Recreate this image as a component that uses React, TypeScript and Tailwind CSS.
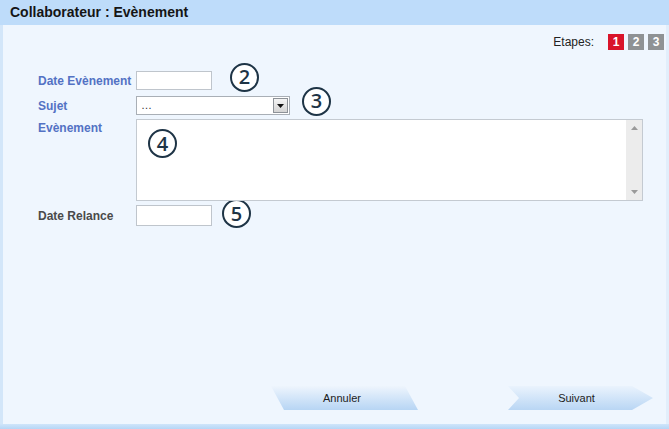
import React from 'react';

const font = { fontFamily: '"Liberation Sans", Arial, sans-serif' };

// numbered annotation circle pasted over the form
const Mark = ({ n, className = '' }: { n: number; className?: string }) => (
  <span
    className={`flex h-[29px] w-[29px] shrink-0 items-center justify-center rounded-full border-[2.5px] border-[#1e3446] bg-white text-[20px] font-semibold leading-none text-[#1e3446] [font-family:'Open_Sans',sans-serif] ${className}`}
  >
    {n}
  </span>
);

const Label = ({ children, muted }: { children: React.ReactNode; muted?: boolean }) => (
  <span className={`w-[98px] shrink-0 text-[12px] font-bold ${muted ? 'text-[#4a4a4a]' : 'text-[#5372c4]'}`}>{children}</span>
);

const App: React.FC = () => {
  return (
    <div style={font} className="flex h-[429px] w-[669px] flex-col overflow-hidden bg-[#eff6fe]">
      <header className="flex h-[25px] shrink-0 items-center bg-[#bedcfa] pl-[10px]">
        <h1 className="text-[14px] font-bold text-[#151515]">Collaborateur : Evènement</h1>
      </header>

      <div className="flex flex-1 border-l-[3px] border-r-[3px] border-l-[#d3e6f9] border-r-[#e2eefb]">
        <div className="flex flex-1 flex-col">
          <div className="flex items-center justify-end gap-[4px] pr-[2px] pt-[8px]">
            <span className="mr-[10px] text-[12px] text-[#222]">Etapes:</span>
            <span className="flex h-[16px] w-[16px] items-center justify-center bg-[#d9142a] text-[12px] font-bold text-white">1</span>
            <span className="flex h-[16px] w-[16px] items-center justify-center bg-[#8f9294] text-[12px] font-bold text-white">2</span>
            <span className="flex h-[16px] w-[16px] items-center justify-center bg-[#8f9294] text-[12px] font-bold text-white">3</span>
          </div>

          <div className="mt-[20px] flex flex-col pl-[35px]">
            <div className="flex h-[19px] items-center">
              <Label>Date Evènement</Label>
              <input className="h-[19px] w-[76px] border border-[#bfc5cc] bg-white" />
              <Mark n={2} className="-mt-[7px] ml-[18px]" />
            </div>

            <div className="mt-[6px] flex h-[19px] items-center">
              <Label>Sujet</Label>
              <div className="flex h-[19px] w-[154px] items-center border border-[#a9afb6] bg-white">
                <span className="flex-1 pl-[4px] text-[11px] leading-none text-[#333]">…</span>
                <span className="mr-[1px] flex h-[15px] w-[15px] items-center justify-center border border-[#8d9298] bg-gradient-to-b from-[#f4f4f4] to-[#d4d4d4]">
                  <svg width="7" height="4" viewBox="0 0 7 4"><path d="M0 0h7L3.5 4z" fill="#111" /></svg>
                </span>
              </div>
              <Mark n={3} className="-mt-[9px] ml-[12px]" />
            </div>

            <div className="mt-[4px] flex items-start">
              <Label>Evènement</Label>
              <div className="relative flex h-[82px] w-[507px] border border-[#c4cad1] bg-white">
                <div className="flex-1" />
                <div className="flex w-[16px] flex-col items-center justify-between bg-[#ececec] py-[6px]">
                  <svg width="7" height="4" viewBox="0 0 7 4"><path d="M0 4h7L3.5 0z" fill="#9a9a9a" /></svg>
                  <svg width="7" height="4" viewBox="0 0 7 4"><path d="M0 0h7L3.5 4z" fill="#9a9a9a" /></svg>
                </div>
                <Mark n={4} className="absolute left-[11px] top-[9px]" />
              </div>
            </div>

            <div className="mt-[4px] flex h-[21px] items-center">
              <Label muted>Date Relance</Label>
              <input className="h-[21px] w-[76px] border border-[#bfc5cc] bg-white" />
              <Mark n={5} className="-mt-[4px] ml-[10px]" />
            </div>
          </div>

          <div className="mt-auto mb-[14px] flex items-center pl-[263px]">
            <button className="relative flex h-[24px] w-[152px] items-center justify-center">
              <svg className="absolute inset-0" width="152" height="24" viewBox="0 0 152 24">
                <defs>
                  <linearGradient id="ga" x1="0" y1="0" x2="0" y2="1">
                    <stop offset="0" stopColor="#eef5fd" />
                    <stop offset="1" stopColor="#b7d5f4" />
                  </linearGradient>
                </defs>
                <polygon points="5,0 139,0 152,24 18,24" fill="url(#ga)" />
              </svg>
              <span className="relative text-[11px] text-[#1c1c1c]">Annuler</span>
            </button>
            <button className="relative ml-[90px] flex h-[24px] w-[145px] items-center justify-center pr-[8px]">
              <svg className="absolute inset-0" width="145" height="24" viewBox="0 0 145 24">
                <defs>
                  <linearGradient id="gs" x1="0" y1="0" x2="0" y2="1">
                    <stop offset="0" stopColor="#eaf3fd" />
                    <stop offset="1" stopColor="#b9d6f4" />
                  </linearGradient>
                </defs>
                <polygon points="0,0 124,0 145,12 124,24 0,24 11,12" fill="url(#gs)" />
              </svg>
              <span className="relative text-[11px] text-[#1c1c1c]">Suivant</span>
            </button>
          </div>
        </div>
      </div>

      <div className="h-[5px] shrink-0 bg-gradient-to-b from-[#cfe5fa] to-[#b6d6f6]" />
    </div>
  );
};

export default App;
